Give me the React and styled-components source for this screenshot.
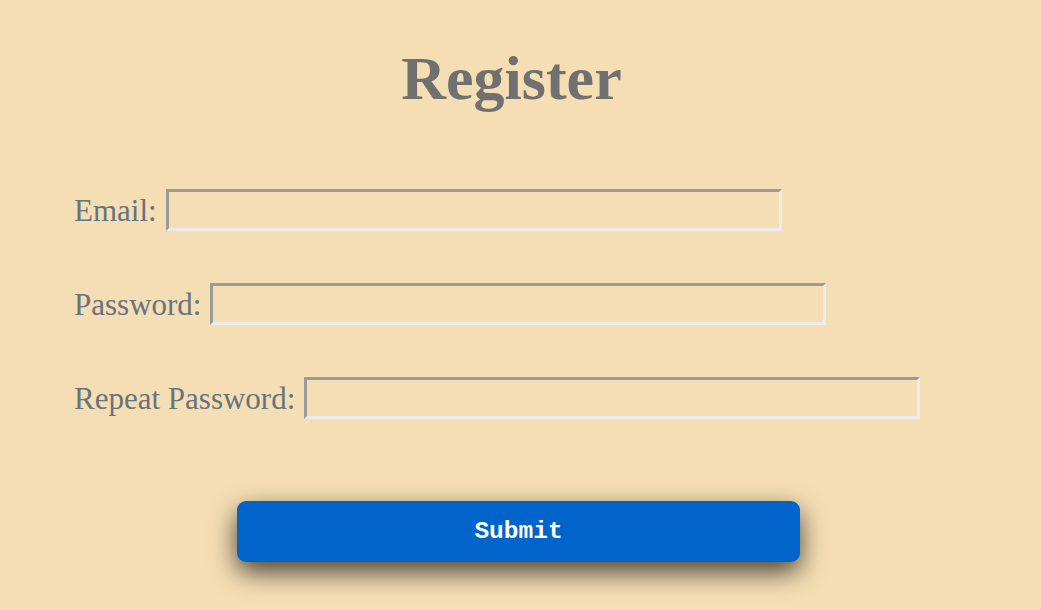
import React from "react";
import styled, { createGlobalStyle } from "styled-components";

const Global = createGlobalStyle`
  html, body { margin: 0; padding: 0; background: #f5deb3; }
  body { font-family: "Liberation Serif", "Times New Roman", serif; }
`;

const Page = styled.div`
  width: 1041px;
  height: 610px;
  background: #f5deb3;
  padding-top: 47px;
  box-sizing: border-box;
`;

const Title = styled.h1`
  margin: 0;
  padding-right: 18px;
  text-align: center;
  font-family: "Liberation Serif", serif;
  font-weight: bold;
  font-size: 62px;
  line-height: 62px;
  color: #707070;
`;

const Form = styled.form`
  display: flex;
  flex-direction: column;
  padding-left: 74px;
  margin-top: 80px;
  gap: 52px;
`;

const Row = styled.div`
  display: flex;
  align-items: center;
  height: 42px;
`;

const Label = styled.label`
  font-family: "Liberation Serif", serif;
  font-size: 31px;
  line-height: 31px;
  color: #67737d;
  margin-right: 9px;
  white-space: nowrap;
`;

const Input = styled.input`
  box-sizing: border-box;
  width: 616px;
  height: 42px;
  margin: 0;
  padding: 0 6px;
  background: transparent;
  border-style: solid;
  border-width: 3px;
  border-color: #9a9a9a #ececec #ececec #9a9a9a;
  font-size: 20px;
  outline: none;
`;

const SubmitButton = styled.button`
  align-self: flex-start;
  margin-left: 163px;
  margin-top: 30px;
  width: 563px;
  height: 61px;
  border: none;
  border-radius: 9px;
  background: #0064cb;
  color: #ffffff;
  font-family: "Liberation Mono", "Courier New", monospace;
  font-weight: bold;
  font-size: 24.5px;
  box-shadow: 0 10px 26px rgba(0, 0, 0, 0.7);
  cursor: pointer;
`;

export default function App() {
  return (
    <>
      <Global />
      <Page>
        <Title>Register</Title>
        <Form onSubmit={(e) => e.preventDefault()}>
          <Row>
            <Label htmlFor="email">Email:</Label>
            <Input id="email" type="email" />
          </Row>
          <Row>
            <Label htmlFor="pw">Password:</Label>
            <Input id="pw" type="password" />
          </Row>
          <Row>
            <Label htmlFor="pw2">Repeat Password:</Label>
            <Input id="pw2" type="password" />
          </Row>
          <SubmitButton type="submit">Submit</SubmitButton>
        </Form>
      </Page>
    </>
  );
}
